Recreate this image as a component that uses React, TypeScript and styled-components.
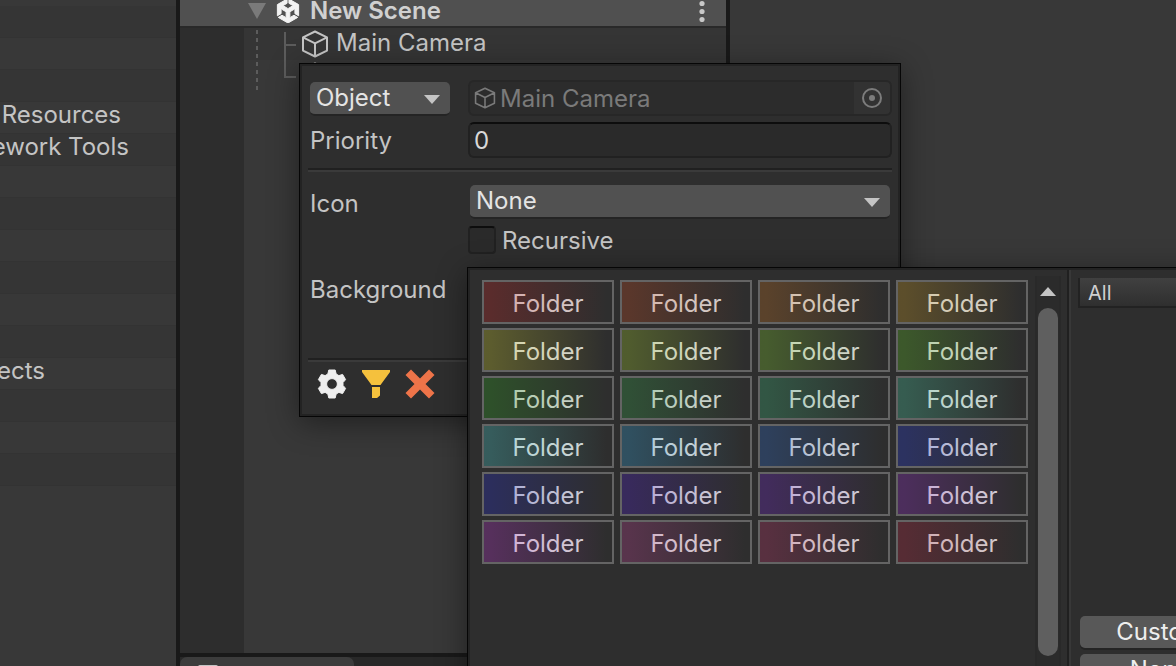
import React from "react";
import styled, { createGlobalStyle, css } from "styled-components";
import { SiUnity } from "react-icons/si";

const Global = createGlobalStyle`
  *, *::before, *::after { box-sizing: border-box; }
  body {
    margin: 0;
    background: #383838;
    color: #c4c4c4;
    font: 24px/32px Inter, "Liberation Sans", sans-serif;
    font-optical-sizing: none;
  }
  button, input, select { font: inherit; color: inherit; margin: 0; }
`;

const Editor = styled.main`
  position: relative;
  display: flex;
  height: 100vh;
  overflow: hidden;
`;

/* ---------- Project list ---------- */

const ProjectList = styled.ul`
  flex: none;
  width: 180px;
  margin: 0;
  padding: 6px 0 0;
  list-style: none;
  overflow: hidden;
  border-right: 4px solid #191919;
`;

const ProjectRow = styled.li<{ $end?: number }>`
  display: flex;
  justify-content: flex-end;
  height: 32px;
  padding-right: ${(p) => p.$end ?? 0}px;
  line-height: 26px;
  white-space: nowrap;
  background: #353535;
  border-bottom: 1px solid #333;
  &:nth-child(even) { background: #383838; }
`;

/* ---------- Hierarchy ---------- */

const Workspace = styled.section`
  flex: 1;
  min-width: 0;
  display: flex;
  flex-direction: column;
`;

const Panels = styled.div`
  flex: 1;
  min-height: 0;
  display: flex;
`;

const Hierarchy = styled.section`
  flex: none;
  width: 550px;
  display: flex;
  flex-direction: column;
  border-right: 4px solid #191919;
`;

const SceneHeader = styled.header`
  display: flex;
  align-items: center;
  gap: 10px;
  height: 28px;
  padding: 0 21px 4px 68px;
  background: #505050;
  border-bottom: 2px solid #292929;
`;

const SceneName = styled.h1`
  flex: 1;
  margin: 0;
  font-size: 24px;
  font-weight: 600;
  line-height: 22px;
  color: #d0d0d0;
`;

const IconButton = styled.button`
  display: grid;
  place-items: center;
  padding: 0;
  border: 0;
  background: none;
`;

const SceneBody = styled.div`
  position: relative;
  flex: 1;
  display: flex;
`;

const Gutter = styled.div`
  flex: none;
  width: 64px;
  background: #2d2d2d;
`;

const Tree = styled.ul`
  flex: 1;
  margin: 0;
  padding: 0;
  list-style: none;
`;

const TreeRow = styled.li`
  display: flex;
  align-items: center;
  gap: 7px;
  height: 32px;
  padding-left: 57px;
  background: #383838;
  &:nth-child(odd) { background: #353535; }
`;

const TreeLabel = styled.span`
  padding-bottom: 2px;
`;

const TreeLines = styled.svg`
  position: absolute;
  left: 72px;
  top: 0;
`;

const BottomBar = styled.div`
  flex: none;
  height: 13px;
  overflow: hidden;
  background: #282828;
  border-top: 4px solid #191919;
`;

const BottomTab = styled.div`
  width: 174px;
  height: 32px;
  padding: 8px 0 0 18px;
  background: #3c3c3c;
  border-radius: 7px 7px 0 0;
`;

const FolderGlyph = styled.div`
  width: 20px;
  height: 18px;
  border-radius: 2px;
  background: #c4c4c4;
`;

/* ---------- Popups ---------- */

const popupFrame = css`
  position: absolute;
  background: #2e2e2e;
  border: 1px solid #060606;
  box-shadow: inset 0 0 0 2px #232323, 0 6px 28px rgba(0, 0, 0, 0.42);
`;

const RulePopup = styled.form`
  ${popupFrame}
  left: 299px;
  top: 63px;
  width: 602px;
  height: 354px;
  display: flex;
  flex-direction: column;
  padding: 16px 8px 2px;
`;

const FieldRow = styled.div<{ $gap?: number }>`
  display: grid;
  grid-template-columns: 160px minmax(0, 1fr);
  align-items: center;
  height: 36px;
  margin-bottom: ${(p) => p.$gap ?? 0}px;
`;

const Label = styled.label<{ $low?: boolean }>`
  padding: ${(p) => (p.$low ? "6px" : "2px")} 0 0 2px;
`;

const Separator = styled.hr`
  flex: none;
  height: 4px;
  margin: 0 0 10px;
  border: 0;
  border-top: 2px solid #202020;
  background: #3a3a3a;
`;

const SelectBox = styled.span<{ $wide?: boolean }>`
  display: grid;
  align-items: center;
  width: ${(p) => (p.$wide ? "auto" : "140px")};
  margin: 2px 2px 0;
  > * { grid-area: 1 / 1; }
  > svg { justify-self: end; margin-right: 10px; pointer-events: none; }
`;

const Select = styled.select`
  appearance: none;
  width: 100%;
  height: 34px;
  padding: 0 32px 2px 6px;
  line-height: 32px;
  color: #e4e4e4;
  background: #515151;
  border: 0;
  border-bottom: 2px solid #242424;
  border-radius: 5px;
`;

const fieldBox = css`
  background: #2a2a2a;
  border: 2px solid #212121;
  border-radius: 6px;
`;

const ObjectField = styled.div`
  ${fieldBox}
  display: flex;
  align-items: center;
  height: 36px;
  padding-left: 4px;
  color: #7a7a7a;
  background: #2c2c2c;
  border-color: #272727;
`;

const ObjectName = styled.input`
  flex: 1;
  min-width: 0;
  height: 32px;
  padding: 2px 0 0 4px;
  border: 0;
  background: none;
`;

const PickerButton = styled(IconButton)`
  width: 36px;
  height: 32px;
  background: #323232;
  border-radius: 0 4px 4px 0;
`;

const NumberInput = styled.input`
  ${fieldBox}
  width: 100%;
  height: 36px;
  padding: 0 4px;
  color: #d8d8d8;
  border-top-color: #0d0d0d;
`;

const CheckLabel = styled.label`
  display: flex;
  align-items: center;
  gap: 6px;
  > span { padding-top: 2px; }
`;

const CheckBox = styled.input`
  ${fieldBox}
  appearance: none;
  width: 28px;
  height: 28px;
  border-radius: 4px;
  border-top-color: #0d0d0d;
`;

const Actions = styled.footer`
  display: flex;
  gap: 12px;
  padding-left: 8px;
  margin-top: -4px;
`;

const Spacer = styled.div`
  flex: 1;
`;

const ActionsArea = styled.div`
  height: 56px;
`;

const PalettePopup = styled.div`
  ${popupFrame}
  left: 467px;
  top: 267px;
  bottom: -24px;
  width: 786px;
  display: flex;
  padding: 2px;
`;

const PaletteMain = styled.div`
  flex: 1;
  display: flex;
  justify-content: space-between;
  padding-right: 6px;
`;

const Swatches = styled.div`
  display: grid;
  grid-template-columns: repeat(4, 132px);
  grid-auto-rows: 44px;
  gap: 4px 6px;
  align-content: start;
  padding: 10px 0 0 12px;
`;

const Swatch = styled.button<{ $tint: string }>`
  display: grid;
  place-items: stretch;
  padding: 0;
  color: #d2d2d2;
  background: #2e2e2e;
  border: 2px solid #646464;
  > span, &::after { grid-area: 1 / 1; }
  > span { height: 40px; line-height: 44px; }
  &::after {
    content: "";
    background: linear-gradient(90deg, rgba(${(p) => p.$tint}, 0.25) 5%, rgba(${(p) => p.$tint}, 0) 96%);
  }
`;

const ScrollTrack = styled.div`
  display: flex;
  flex-direction: column;
  align-items: center;
  gap: 12px;
  width: 26px;
  margin-top: 6px;
  padding: 11px 0 31px;
  background: #2b2b2b;
  border: solid #292929;
  border-width: 0 2px;
`;

const ScrollThumb = styled.div`
  flex: 1;
  width: 20px;
  border-radius: 10px;
  background: #5f5f5f;
`;

const PaletteSide = styled.div`
  flex: none;
  width: 183px;
  display: flex;
  flex-direction: column;
  gap: 6px;
  padding: 8px 9px 1px 9px;
  border-left: 2px solid #202020;
  box-shadow: inset 2px 0 0 #383838;
`;

const FilterSelect = styled.select`
  appearance: none;
  height: 30px;
  padding: 1px 10px 0 8px;
  font-size: 20px;
  line-height: 28px;
  color: #cfcfcf;
  background: linear-gradient(#404040, #2f2f2f);
  border: solid #222;
  border-width: 0 0 2px 2px;
  border-radius: 0;
`;

const PushButton = styled.button`
  width: 160px;
  height: 32px;
  margin-left: 2px;
  padding: 0;
  line-height: 32px;
  color: #eee;
  background: #585858;
  border: 0;
  border-radius: 5px;
  box-shadow: 0 2px 0 #242424;
`;

/* ---------- Icons ---------- */

const Triangle = ({ w = 16, h = 9, up = false, fill = "#c4c4c4" }) => (
  <svg width={w} height={h} viewBox="0 0 16 9" preserveAspectRatio="none" aria-hidden="true">
    <path d={up ? "M0 9L8 0L16 9Z" : "M0 0H16L8 9Z"} fill={fill} />
  </svg>
);

const Cube = ({ size = 28 }) => (
  <svg width={size} height={size} viewBox="0 0 28 28" fill="none" stroke="currentColor" strokeWidth="2" strokeLinejoin="round" aria-hidden="true">
    <path d="M14 1.5L26 7.4V20.6L14 26.5L2 20.6V7.4ZM2 7.4L14 13.4L26 7.4M14 13.4V26.5" />
  </svg>
);

const Kebab = () => (
  <svg width="6" height="22" viewBox="0 0 6 22" fill="#c8c8c8" aria-hidden="true">
    <circle cx="3" cy="3.5" r="2.6" />
    <circle cx="3" cy="11.5" r="2.6" />
    <circle cx="3" cy="19.5" r="2.6" />
  </svg>
);

const Target = () => (
  <svg width="20" height="20" viewBox="0 0 20 20" aria-hidden="true">
    <circle cx="10" cy="10" r="9" fill="none" stroke="#7c7c7c" strokeWidth="2" />
    <circle cx="10" cy="10" r="3" fill="#7c7c7c" />
  </svg>
);

const Gear = () => (
  <svg width="32" height="32" viewBox="0 0 32 32" fill="#efefef" stroke="#efefef" strokeWidth="1" strokeLinejoin="round" fillRule="evenodd" aria-hidden="true">
    <path d="M12.8 2H19.2L20.2 6.1L22.9 7.6L26.6 6.4L29.6 11.6L27 14.6V17.4L29.6 20.4L26.6 25.6L22.9 24.4L20.2 25.9L19.2 30H12.8L11.8 25.9L9.1 24.4L5.4 25.6L2.4 20.4L5 17.4V14.6L2.4 11.6L5.4 6.4L9.1 7.6L11.8 6.1ZM16 10.6A5.4 5.4 0 1 0 16 21.4A5.4 5.4 0 1 0 16 10.6Z" />
  </svg>
);

const Funnel = () => (
  <svg width="32" height="32" viewBox="0 0 32 32" fill="#f5c13d" aria-hidden="true">
    <path d="M2 2H30V4L20.5 17H11.5L2 4ZM12 19H20V27.5L17 30H12Z" />
  </svg>
);

const Cross = () => (
  <svg width="32" height="32" viewBox="0 0 32 32" fill="#ee7449" aria-hidden="true">
    <path d="M7 1.5L16 10.5L25 1.5L30.5 7L21.5 16L30.5 25L25 30.5L16 21.5L7 30.5L1.5 25L10.5 16L1.5 7Z" />
  </svg>
);

/* ---------- Data ---------- */

const projectRows: { text?: string; end?: number }[] = Array.from({ length: 15 }, () => ({}));
projectRows[3] = { text: "Resources", end: 55 };
projectRows[4] = { text: "ework Tools", end: 47 };
projectRows[11] = { text: "ects", end: 131 };

const tints = [
  "222,38,38", "222,82,34", "222,126,34", "230,174,34",
  "230,230,46", "182,230,46", "142,230,46", "102,214,34",
  "46,182,30", "54,182,78", "62,206,134", "78,230,182",
  "78,230,230", "54,182,246", "46,118,230", "38,62,246",
  "38,46,230", "86,30,230", "126,38,230", "166,46,230",
  "206,54,230", "214,70,166", "214,54,118", "206,38,70",
];

export default function App() {
  return (
    <>
      <Global />
      <Editor>
        <ProjectList>
          {projectRows.map((row, i) => (
            <ProjectRow key={i} $end={row.end}>{row.text}</ProjectRow>
          ))}
        </ProjectList>

        <Workspace>
          <Panels>
            <Hierarchy>
              <SceneHeader>
                <Triangle w={18} h={16} fill="#7a7a7a" />
                <SiUnity size={24} color="#f2f2f2" stroke="#f2f2f2" strokeWidth="1" aria-hidden="true" />
                <SceneName>New Scene</SceneName>
                <IconButton type="button" aria-label="Scene menu"><Kebab /></IconButton>
              </SceneHeader>
              <SceneBody>
                <Gutter />
                <Tree>
                  <TreeRow><Cube /><TreeLabel>Main Camera</TreeLabel></TreeRow>
                  <TreeRow><Cube /></TreeRow>
                </Tree>
                <TreeLines width="46" height="64" viewBox="0 0 46 64" fill="none" stroke="#5c5c5c" strokeWidth="2" aria-hidden="true">
                  <path d="M5 2V62" strokeDasharray="4 4" />
                  <path d="M33 4V49H44M33 17H44" />
                </TreeLines>
              </SceneBody>
            </Hierarchy>
          </Panels>
          <BottomBar>
            <BottomTab><FolderGlyph /></BottomTab>
          </BottomBar>
        </Workspace>

        <RulePopup onSubmit={(e) => e.preventDefault()}>
          <FieldRow $gap={6}>
            <SelectBox>
              <Select aria-label="Rule type" defaultValue="Object">
                <option>Object</option>
              </Select>
              <Triangle />
            </SelectBox>
            <ObjectField>
              <Cube size={22} />
              <ObjectName aria-label="Object" readOnly value="Main Camera" />
              <PickerButton type="button" aria-label="Pick object"><Target /></PickerButton>
            </ObjectField>
          </FieldRow>
          <FieldRow $gap={10}>
            <Label htmlFor="priority">Priority</Label>
            <NumberInput id="priority" defaultValue="0" />
          </FieldRow>
          <Separator />
          <FieldRow $gap={4}>
            <Label htmlFor="icon" $low>Icon</Label>
            <SelectBox $wide>
              <Select id="icon" defaultValue="None">
                <option>None</option>
              </Select>
              <Triangle />
            </SelectBox>
          </FieldRow>
          <FieldRow $gap={10}>
            <span />
            <CheckLabel><CheckBox type="checkbox" /><span>Recursive</span></CheckLabel>
          </FieldRow>
          <FieldRow>
            <Label as="span" $low>Background</Label>
          </FieldRow>
          <Spacer />
          <ActionsArea>
            <Separator />
            <Actions>
              <IconButton type="button" aria-label="Settings"><Gear /></IconButton>
              <IconButton type="button" aria-label="Filter"><Funnel /></IconButton>
              <IconButton type="button" aria-label="Delete"><Cross /></IconButton>
            </Actions>
          </ActionsArea>
        </RulePopup>

        <PalettePopup>
          <PaletteMain>
            <Swatches>
              {tints.map((tint) => (
                <Swatch key={tint} type="button" $tint={tint}><span>Folder</span></Swatch>
              ))}
            </Swatches>
            <ScrollTrack>
              <Triangle up />
              <ScrollThumb />
            </ScrollTrack>
          </PaletteMain>
          <PaletteSide>
            <FilterSelect aria-label="Filter colours" defaultValue="All">
              <option>All</option>
            </FilterSelect>
            <Spacer />
            <PushButton type="button">Custom</PushButton>
            <PushButton type="button">None</PushButton>
          </PaletteSide>
        </PalettePopup>
      </Editor>
    </>
  );
}
